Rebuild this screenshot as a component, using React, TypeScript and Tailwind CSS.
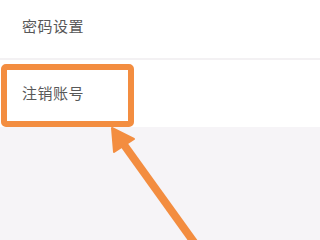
export default function App() {
  return (
    <div
      className="relative w-[320px] h-[240px] overflow-hidden bg-[#f6f4f7]"
      style={{ fontFamily: '"Noto Sans CJK SC", "Noto Sans", sans-serif' }}
    >
      {/* Settings rows */}
      <div className="h-[58px] bg-white flex items-center pl-[22px] pb-[6px]">
        <span className="text-[15px] text-[#585858] tracking-[0.5px]">密码设置</span>
      </div>
      <div className="h-[2px] bg-[#f3f1f3]" />
      <div className="h-[67px] bg-white flex items-center pl-[22px]">
        <span className="text-[15px] text-[#585858] tracking-[0.5px]">注销账号</span>
      </div>

      {/* Highlight box */}
      <div className="absolute left-[1px] top-[64px] w-[133px] h-[63px] border-[6px] border-[#f38d40] rounded-[5px]" />

      {/* Arrow */}
      <svg className="absolute left-0 top-0" width="320" height="240" viewBox="0 0 320 240">
        <line x1="196" y1="245" x2="122" y2="142" stroke="#f38d40" strokeWidth="8" />
        <polygon points="112,128 114,152 134,139" fill="#f38d40" stroke="#f38d40" strokeWidth="2" strokeLinejoin="round" />
      </svg>
    </div>
  );
}
